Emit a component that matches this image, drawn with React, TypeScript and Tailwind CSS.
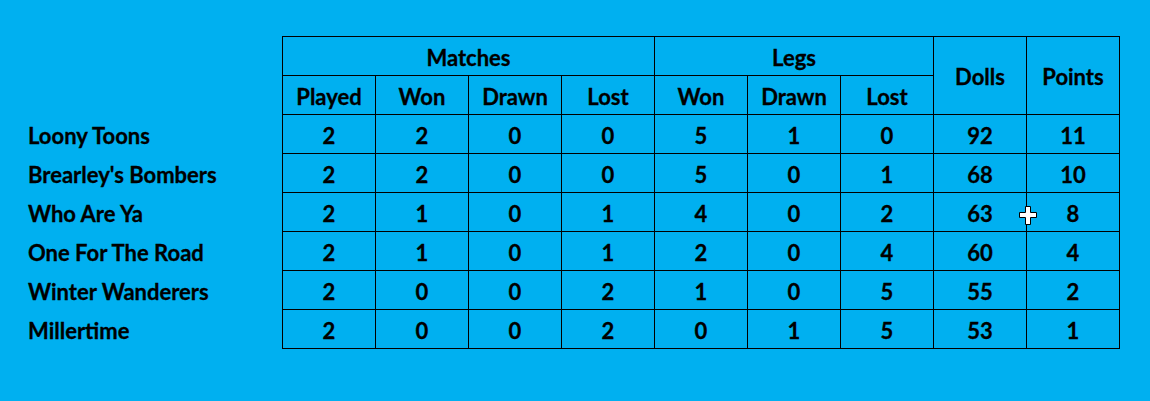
const teams = [
  { name: "Loony Toons", stats: [2, 2, 0, 0, 5, 1, 0, 92, 11] },
  { name: "Brearley's Bombers", stats: [2, 2, 0, 0, 5, 0, 1, 68, 10] },
  { name: "Who Are Ya", stats: [2, 1, 0, 1, 4, 0, 2, 63, 8] },
  { name: "One For The Road", stats: [2, 1, 0, 1, 2, 0, 4, 60, 4] },
  { name: "Winter Wanderers", stats: [2, 0, 0, 2, 1, 0, 5, 55, 2] },
  { name: "Millertime", stats: [2, 0, 0, 2, 0, 1, 5, 53, 1] },
];

const cell = "flex items-center justify-center bg-[#00b0f0] pt-[2px]";

function CrossCursor() {
  return (
    <svg
      className="pointer-events-none absolute left-[1019px] top-[206px]"
      width="18"
      height="19"
      viewBox="0 0 18 19"
    >
      <path
        d="M6.5 0.5h5v6h6v5h-6v7h-5v-7h-6v-5h6z"
        fill="#fff"
        stroke="#000"
        strokeWidth="1"
        strokeLinejoin="round"
      />
    </svg>
  );
}

export default function App() {
  return (
    <div className="relative h-[401px] w-[1150px] bg-[#00b0f0] pl-[28px] pt-[36px] font-['Lato',sans-serif] text-[22px] font-bold text-black [-webkit-text-stroke:0.3px_#000]">
      <div className="flex">
        <div className="flex w-[254px] flex-col gap-px pt-[79px]">
          {teams.map((team) => (
            <div className="flex h-[38px] items-center pt-[2px]" key={team.name}>
              {team.name}
            </div>
          ))}
        </div>

        <div className="grid grid-cols-[repeat(9,92px)] grid-rows-[repeat(8,38px)] gap-px bg-black p-px">
          <div className={`${cell} col-span-4`}>Matches</div>
          <div className={`${cell} col-span-3`}>Legs</div>
          <div className={`${cell} row-span-2`}>Dolls</div>
          <div className={`${cell} row-span-2`}>Points</div>
          {["Played", "Won", "Drawn", "Lost", "Won", "Drawn", "Lost"].map((label, i) => (
            <div className={cell} key={i}>
              {label}
            </div>
          ))}
          {teams.map((team) =>
            team.stats.map((value, i) => (
              <div className={cell} key={`${team.name}-${i}`}>
                {value}
              </div>
            ))
          )}
        </div>
      </div>
      <CrossCursor />
    </div>
  );
}
